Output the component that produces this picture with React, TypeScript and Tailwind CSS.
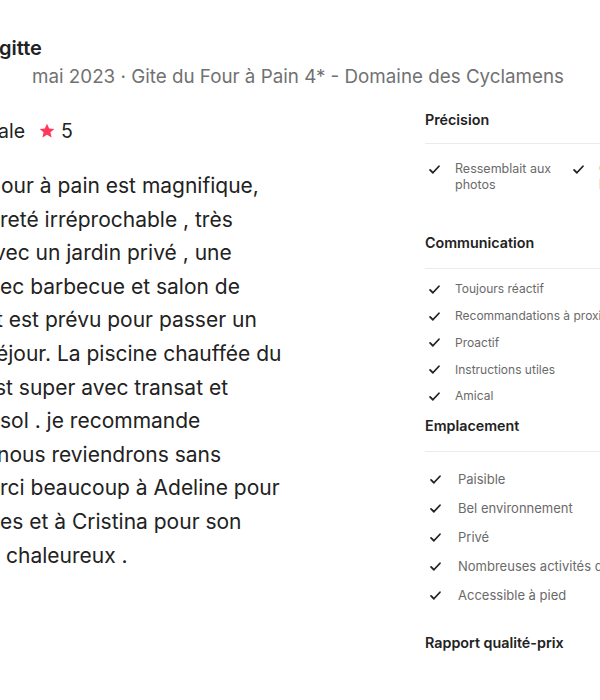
const body = [
  { text: "our à pain est magnifique,", cls: "ml-[1px]" },
  { text: "reté irréprochable , très", cls: "ml-0" },
  { text: "vec un jardin privé , une", cls: "-ml-[6px]" },
  { text: "ec barbecue et salon de", cls: "ml-0" },
  { text: "t est prévu pour passer un", cls: "-ml-[4px]" },
  { text: "éjour. La piscine chauffée du", cls: "-ml-[4px]" },
  { text: "st super avec transat et", cls: "-ml-[5px]" },
  { text: "sol . je recommande", cls: "ml-0" },
  { text: "nous reviendrons sans", cls: "-ml-[3px]" },
  { text: "rci beaucoup à Adeline pour", cls: "ml-0" },
  { text: "es et à Cristina pour son", cls: "ml-0" },
  { text: "l chaleureux .", cls: "-ml-[5px]" },
];

const communication = [
  "Toujours réactif",
  "Recommandations à proximité",
  "Proactif",
  "Instructions utiles",
  "Amical",
];

const emplacement = [
  "Paisible",
  "Bel environnement",
  "Privé",
  "Nombreuses activités dans le coin",
  "Accessible à pied",
];

function Check() {
  return (
    <svg viewBox="0 0 16 16" className="h-[13px] w-[13px] shrink-0 text-[#222222]" fill="none">
      <path d="M2.5 8.5l3.5 3.5 7.5-8" stroke="currentColor" strokeWidth="2.2" strokeLinecap="round" strokeLinejoin="round" />
    </svg>
  );
}

function Item({ label, rowCls, textCls }: { label: string; rowCls: string; textCls: string }) {
  return (
    <div className={`flex items-center ${rowCls}`}>
      <Check />
      <span className={`whitespace-nowrap leading-4 text-[#6a6a6a] ${textCls}`}>{label}</span>
    </div>
  );
}

function Section({ title }: { title: string }) {
  return (
    <>
      <h3 className="text-[14.3px] font-semibold leading-5 text-[#222222]">{title}</h3>
      <div className="mt-[15px] h-px bg-[#ebebeb]" />
    </>
  );
}

export default function App() {
  return (
    <div
      className="h-[700px] w-[600px] overflow-hidden bg-white text-[#222222]"
      style={{ fontFamily: "Inter, 'Noto Sans', sans-serif" }}
    >
      {/* reviewer + stay */}
      <div className="pt-[36px]">
        <div className="-ml-[1px] whitespace-nowrap text-[20px] font-semibold leading-6">gitte</div>
        <div className="mt-[5px] whitespace-nowrap pl-[32px] text-[18.8px] leading-6 text-[#717171]">
          mai 2023 · Gite du Four à Pain 4* - Domaine des Cyclamens
        </div>
      </div>

      <div className="flex">
        {/* review text */}
        <div className="w-[425px] shrink-0 overflow-hidden pt-[30px]">
          <div className="flex items-center whitespace-nowrap text-[19.5px] leading-6">
            <span className="-ml-[2px]">ale</span>
            <svg viewBox="0 0 24 24" className="ml-[13px] h-[18px] w-[18px] text-[#ff385c]" fill="currentColor">
              <path d="M12 2.2l2.9 6.3 6.9.7-5.2 4.6 1.5 6.8L12 17.1l-6.1 3.5 1.5-6.8-5.2-4.6 6.9-.7z" />
            </svg>
            <span className="ml-[5px]">5</span>
          </div>
          <div className="mt-[26px] text-[21px] leading-[33.6px] text-[#222222]">
            {body.map((l) => (
              <div key={l.text} className={`whitespace-nowrap ${l.cls}`}>
                {l.text}
              </div>
            ))}
          </div>
        </div>

        {/* rating details */}
        <div className="min-w-0 flex-1 overflow-hidden pt-[21px]">
          <div className="w-[260px]">
            <h3 className="text-[14.3px] font-semibold leading-5">Précision</h3>
            <div className="mt-[13px] h-px bg-[#ebebeb]" />
            <div className="mt-[17px] grid grid-cols-[144px_144px]">
              {["Ressemblait aux photos", "Conforme à l'annonce"].map((t) => (
                <div key={t} className="flex items-start gap-[14px] pl-[3px]">
                  <span className="pt-[2px]"><Check /></span>
                  <span className="w-[112px] text-[12.5px] leading-4 text-[#6a6a6a]">{t}</span>
                </div>
              ))}
            </div>

            <div className="mt-[40px]">
              <Section title="Communication" />
            </div>
            <div className="mt-[7px]">
              {communication.map((t) => (
                <Item key={t} label={t} rowCls="h-[26.75px] gap-[14px] pl-[3px]" textCls="text-[12px]" />
              ))}
            </div>

            <div className="mt-[6px]">
              <Section title="Emplacement" />
            </div>
            <div className="mt-[13px]">
              {emplacement.map((t) => (
                <Item key={t} label={t} rowCls="h-[29px] gap-[16px] pl-[4px]" textCls="text-[13px]" />
              ))}
            </div>

            <h3 className="mt-[23px] text-[14.3px] font-semibold leading-5">Rapport qualité-prix</h3>
          </div>
        </div>
      </div>
    </div>
  );
}
